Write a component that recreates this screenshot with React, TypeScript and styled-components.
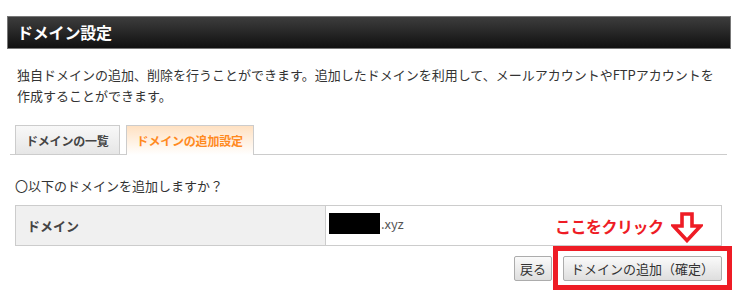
import React from "react";
import styled, { createGlobalStyle } from "styled-components";

const GlobalStyle = createGlobalStyle`
  html, body { margin: 0; padding: 0; background: #ffffff; }
  body {
    font-family: "Noto Sans CJK JP", "Noto Sans", sans-serif;
    color: #333333;
    -webkit-font-smoothing: antialiased;
  }
`;

const Page = styled.div`
  box-sizing: border-box;
  width: 738px;
  min-height: 299px;
  padding: 16px 7px 0 7px;
`;

const Header = styled.div`
  height: 31px;
  border: 1px solid #777777;
  background: linear-gradient(#3d3d3d, #101010);
  display: flex;
  align-items: center;
  padding-left: 9px;
`;

const Title = styled.h1`
  margin: 0;
  font-size: 16px;
  font-weight: 700;
  color: #ffffff;
  line-height: 31px;
  letter-spacing: -0.2px;
`;

const Description = styled.p`
  margin: 15px 0 0 0;
  padding-left: 10px;
  font-size: 13px;
  line-height: 21px;
  color: #333333;
`;

const TabBar = styled.div`
  display: flex;
  gap: 6px;
  margin: 19px 4px 0 3px;
  padding-left: 5px;
  border-bottom: 1px solid #cccccc;
  align-items: flex-end;
`;

const Tab = styled.div<{ $active?: boolean }>`
  height: 28px;
  box-sizing: content-box;
  border: 1px solid #cccccc;
  border-bottom: none;
  padding: 0 10px;
  display: flex;
  align-items: center;
  font-size: 12px;
  font-weight: 700;
  color: ${(p) => (p.$active ? "#ff8a1f" : "#444444")};
  background: ${(p) =>
    p.$active
      ? "linear-gradient(#ffe1c2, #ffffff)"
      : "linear-gradient(#f8f8f8, #e6e6e6)"};
  margin-bottom: ${(p) => (p.$active ? "-1px" : "0")};
  padding-bottom: ${(p) => (p.$active ? "1px" : "0")};
  letter-spacing: -0.2px;
`;

const Question = styled.p`
  margin: 21px 0 0 0;
  padding-left: 8px;
  font-size: 13px;
  line-height: 20px;
  color: #333333;
`;

const ConfirmArea = styled.div`
  position: relative;
  margin: 9px 9px 0 8px;
`;

const Table = styled.table`
  width: 100%;
  border-collapse: collapse;
  border: 1px solid #cccccc;
`;

const HeadCell = styled.th`
  width: 298px;
  height: 39px;
  padding: 0 0 0 11px;
  border: 1px solid #cccccc;
  background: #f0f0f0;
  text-align: left;
  font-size: 13px;
  font-weight: 700;
  color: #444444;
`;

const ValueCell = styled.td`
  height: 39px;
  padding: 0 0 0 3px;
  border: 1px solid #cccccc;
  font-size: 13px;
  color: #555555;
`;

const DomainValue = styled.span`
  display: inline-flex;
  align-items: center;
`;

const Redacted = styled.span`
  display: inline-block;
  width: 51px;
  height: 21px;
  background: #000000;
  margin-right: 1px;
`;

const ButtonRow = styled.div`
  display: flex;
  justify-content: flex-end;
  gap: 11px;
  margin-top: 10px;
  height: 25px;
`;

const Button = styled.button<{ $wide?: boolean }>`
  height: 25px;
  padding: 0 ${(p) => (p.$wide ? "7px" : "5px")};
  border: 1px solid #acacac;
  border-radius: 2px;
  background: linear-gradient(#fafafa, #dedede);
  font-family: "Noto Sans CJK JP", "Noto Sans", sans-serif;
  font-size: 13px;
  color: #333333;
  line-height: 23px;
  cursor: pointer;
`;

const Hint = styled.div`
  position: absolute;
  left: 540px;
  top: 7px;
  display: flex;
  align-items: flex-start;
  gap: 7px;
`;

const HintText = styled.span`
  margin-top: 3px;
  font-size: 16px;
  font-weight: 700;
  color: #ee1c25;
  line-height: 22px;
  letter-spacing: -0.5px;
`;

const HighlightBox = styled.div`
  position: absolute;
  left: 538px;
  top: 41px;
  width: 179px;
  height: 44px;
  box-sizing: border-box;
  border: 5px solid #ee1c25;
  pointer-events: none;
`;

const DownArrow = () => (
  <svg width="32" height="31" viewBox="0 0 32 31">
    <polygon
      points="11,2 21,2 21,14 29.5,14 16,28.5 2.5,14 11,14"
      fill="#ffffff"
      stroke="#ee1c25"
      strokeWidth="3.6"
      strokeLinejoin="miter"
    />
  </svg>
);

export default function App() {
  return (
    <>
      <GlobalStyle />
      <Page>
        <Header>
          <Title>ドメイン設定</Title>
        </Header>
        <Description>
          独自ドメインの追加、削除を行うことができます。追加したドメインを利用して、メールアカウントやFTPアカウントを
          <br />
          作成することができます。
        </Description>
        <TabBar>
          <Tab>ドメインの一覧</Tab>
          <Tab $active>ドメインの追加設定</Tab>
        </TabBar>
        <Question>〇以下のドメインを追加しますか？</Question>
        <ConfirmArea>
          <Table>
            <tbody>
              <tr>
                <HeadCell>ドメイン</HeadCell>
                <ValueCell>
                  <DomainValue>
                    <Redacted />
                    .xyz
                  </DomainValue>
                </ValueCell>
              </tr>
            </tbody>
          </Table>
          <ButtonRow>
            <Button>戻る</Button>
            <Button $wide>ドメインの追加（確定）</Button>
          </ButtonRow>
          <Hint>
            <HintText>ここをクリック</HintText>
            <DownArrow />
          </Hint>
          <HighlightBox />
        </ConfirmArea>
      </Page>
    </>
  );
}
